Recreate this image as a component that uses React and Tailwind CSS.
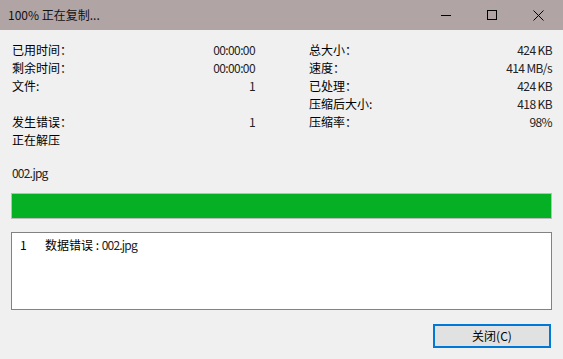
import React from 'react';

const font = { fontFamily: '"Noto Sans CJK SC", "Noto Sans", sans-serif' };

const leftRows = [
  ['已用时间：', '00:00:00'],
  ['剩余时间：', '00:00:00'],
  ['文件:', '1'],
  ['', ''],
  ['发生错误：', '1'],
  ['正在解压', ''],
];

const rightRows = [
  ['总大小：', '424 KB'],
  ['速度：', '414 MB/s'],
  ['已处理：', '424 KB'],
  ['压缩后大小:', '418 KB'],
  ['压缩率：', '98%'],
];

const Row = ({ label, value }) => (
  <div className="flex justify-between h-[18px] leading-[18px]">
    <span>{label}</span>
    <span className="tracking-[-0.6px] text-[#222]">{value}</span>
  </div>
);

const App = () => {
  return (
    <div className="w-[563px] h-[359px] bg-[#f0f0f0] flex flex-col text-[12px] text-black overflow-hidden" style={font}>
      {/* Title bar */}
      <div className="h-[30px] shrink-0 bg-[#b1a4a5] flex items-center">
        <span className="pl-2 flex-1 text-[#111]">100% 正在复制...</span>
        <div className="flex items-center h-full">
          <div className="w-[46px] h-full flex items-center justify-center">
            <div className="w-[10px] h-px bg-black" />
          </div>
          <div className="w-[46px] h-full flex items-center justify-center">
            <div className="w-[10px] h-[10px] border border-black" />
          </div>
          <div className="w-[46px] h-full flex items-center justify-center mr-[2px]">
            <svg width="11" height="11" viewBox="0 0 11 11">
              <path d="M0.5 0.5 L10.5 10.5 M10.5 0.5 L0.5 10.5" stroke="#000" strokeWidth="1" />
            </svg>
          </div>
        </div>
      </div>

      {/* Body */}
      <div className="flex flex-col pl-[12px] pr-[11px] pt-[11px]">
        <div className="grid grid-cols-[243px_243px] gap-x-[54px]">
          <div>
            {leftRows.map(([l, v], i) => (
              <Row key={i} label={l} value={v} />
            ))}
          </div>
          <div>
            {rightRows.map(([l, v], i) => (
              <Row key={i} label={l} value={v} />
            ))}
          </div>
        </div>

        <div className="mt-[15px] h-[18px] leading-[18px] tracking-[-0.8px] text-[#222]">002.jpg</div>

        <div className="mt-[11px] h-[26px] border border-[#bcbcbc] bg-[#06b025] -ml-px" />

        <div className="mt-[13px] h-[78px] border border-[#828282] bg-white -ml-px flex items-start pt-[3px] leading-[18px]">
          <span className="pl-[8px] w-[33px]">1</span>
          <span>
            数据错误 :{' '}
            <span className="tracking-[-0.8px] text-[#222]">002.jpg</span>
          </span>
        </div>

        <div className="mt-[14px] flex justify-end">
          <button className="w-[118px] h-[24px] border-2 border-[#0078d7] bg-[#e1e1e1] flex items-center justify-center leading-none mr-px">
            关闭(C)
          </button>
        </div>
      </div>
    </div>
  );
};

export default App;
